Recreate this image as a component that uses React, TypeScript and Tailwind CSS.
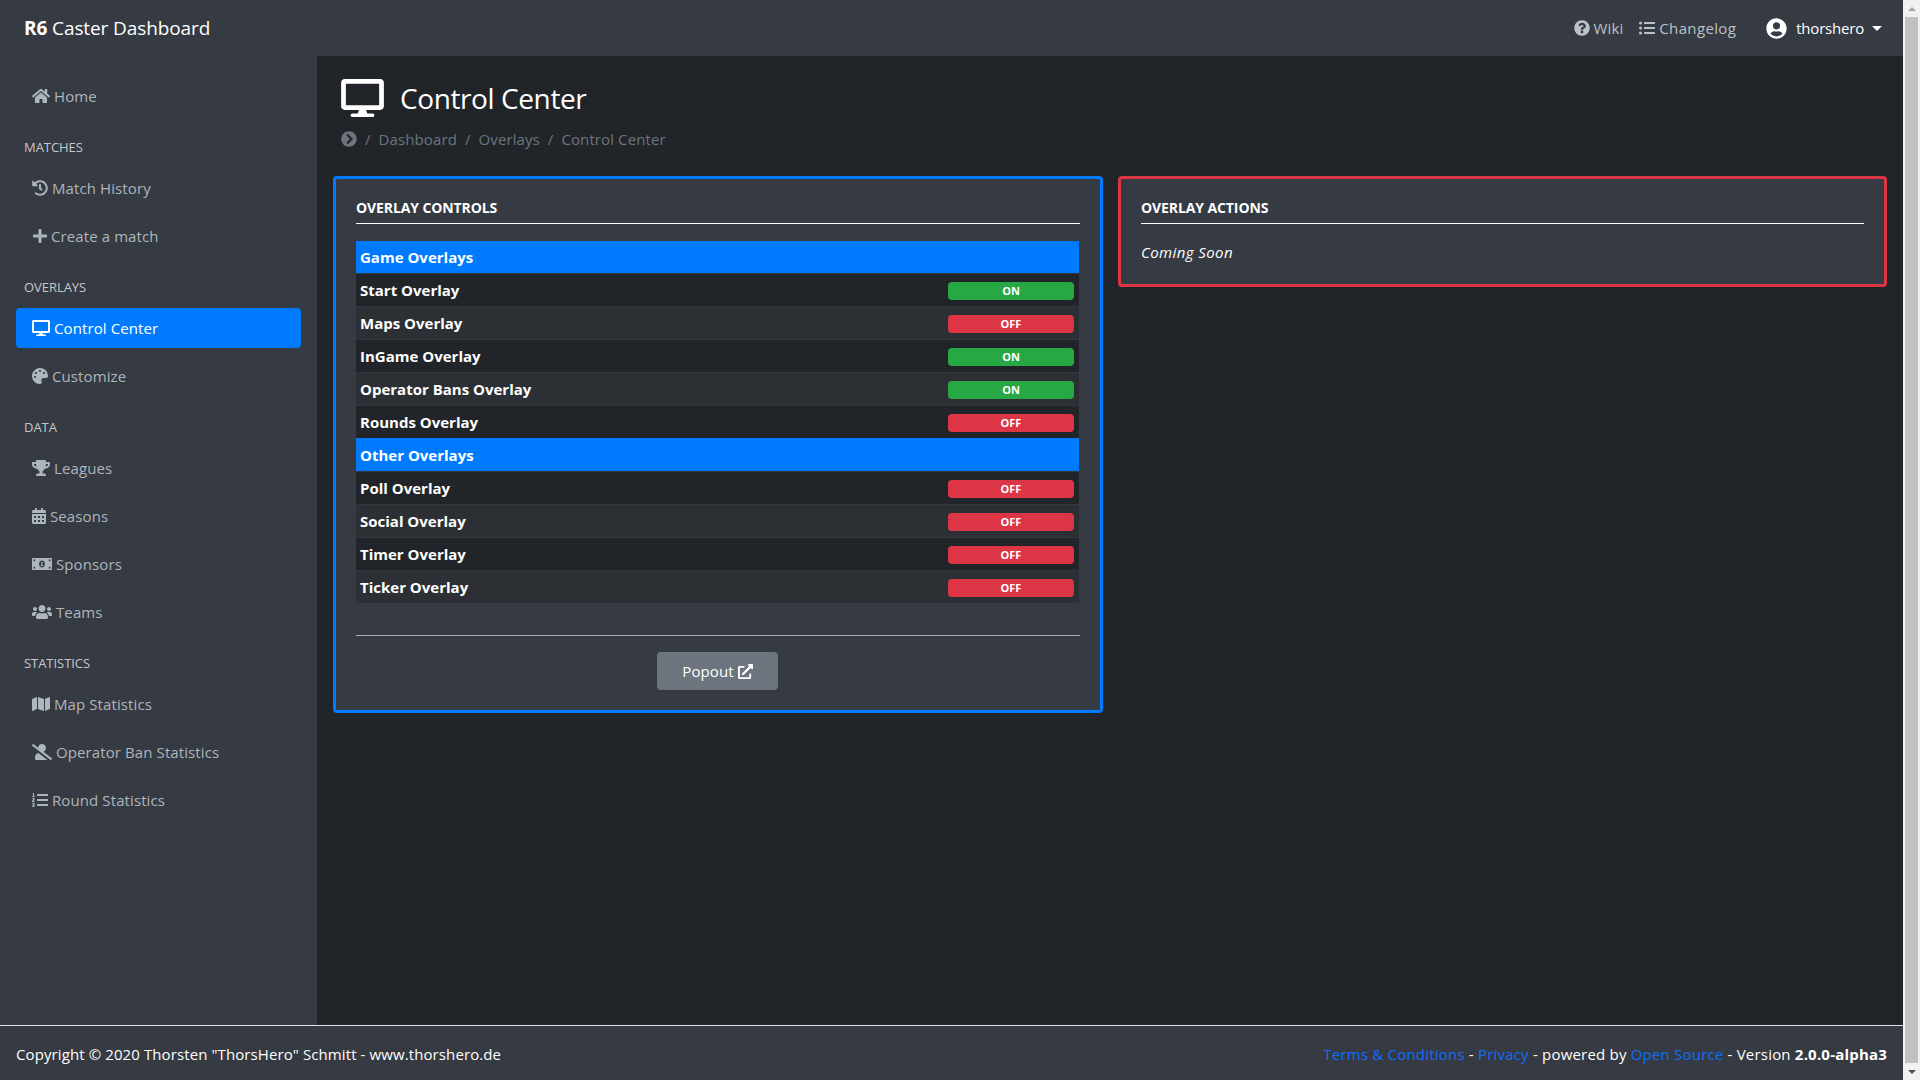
import React from "react";
import {
  FaHome, FaHistory, FaPlus, FaDesktop, FaPalette, FaTrophy, FaCalendarAlt, FaMoneyBillAlt, FaUsers, FaMap, FaUserSlash, FaListOl,
  FaQuestionCircle, FaListUl, FaUserCircle, FaChevronCircleRight, FaExternalLinkAlt,
} from "react-icons/fa";

const font = "font-['Open_Sans','Noto_Sans',sans-serif]";

function NavItem({ icon, label, gap, active }: { icon: React.ReactNode; label: string; gap?: string; active?: boolean }) {
  return (
    <a className={`flex items-center h-10 mb-2 rounded-[4px] pl-4 text-[15px] tracking-[0.1px] ${gap ?? "gap-[4px]"} ${active ? "bg-[#007bff] text-white" : "text-[#adb5bd]"}`}>
      {icon}
      <span>{label}</span>
    </a>
  );
}

function Heading({ children }: { children: React.ReactNode }) {
  return <div className="h-11 pl-2 pt-[13px] text-[13px] leading-5 tracking-[-0.05px] text-[#c4c8cd]">{children}</div>;
}

function Row({ label, on, alt }: { label: string; on: boolean; alt?: boolean }) {
  return (
    <div className={`flex items-center justify-between h-[33px] pl-1 pr-[5px] border-t border-[#32383e] ${alt ? "bg-[#2c3034]" : "bg-[#212529]"}`}>
      <span className="text-[15px] font-bold tracking-[0px] text-white">{label}</span>
      <span className={`flex items-center justify-center w-[126px] h-[18px] mt-[2px] rounded-[4px] text-[11px] font-bold text-white ${on ? "bg-[#28a745]" : "bg-[#dc3545]"}`}>
        {on ? "ON" : "OFF"}
      </span>
    </div>
  );
}

function GroupRow({ label, first }: { label: string; first?: boolean }) {
  return (
    <div className={`flex items-center pt-[1px] px-1 bg-[#007bff] text-[15px] font-bold tracking-[0px] text-white ${first ? "h-8" : "h-[33px]"}`}>{label}</div>
  );
}

export default function App() {
  return (
    <div className={`flex h-screen w-screen overflow-hidden bg-[#212529] ${font}`}>
      <div className="flex flex-col flex-1 min-w-0">
        <header className="flex items-center h-14 shrink-0 bg-[#363a42] pl-6 pr-[21px] text-white">
          <div className="text-[19px] tracking-[-0.1px]"><b>R6</b> Caster Dashboard</div>
          <div className="ml-auto flex items-center text-[15px] tracking-[0.1px] text-[#bcc1c6]">
            <FaQuestionCircle className="w-4 h-4 mr-[4px]" />
            <span>Wiki</span>
            <FaListUl className="w-4 h-4 ml-4 mr-[4px]" />
            <span className="tracking-[0.35px]">Changelog</span>
            <FaUserCircle className="w-[21px] h-[21px] ml-[30px] mr-[9px] text-white" />
            <span className="text-white tracking-[-0.2px]">thorshero</span>
            <span className="ml-2 w-0 h-0 border-x-[5px] border-x-transparent border-t-[5px] border-t-white" />
          </div>
        </header>
        <div className="flex flex-1 min-h-0">
          <aside className="w-[317px] shrink-0 bg-[#363a42] pl-4 pr-4 pt-5">
            <NavItem icon={<FaHome className="w-[18px] h-[16px]" />} label="Home" />
            <Heading>MATCHES</Heading>
            <NavItem icon={<FaHistory className="w-[16px] h-[16px]" />} label="Match History" />
            <NavItem gap="gap-[3px]" icon={<FaPlus className="w-[16px] h-[16px]" />} label="Create a match" />
            <Heading>OVERLAYS</Heading>
            <NavItem active icon={<FaDesktop className="w-[18px] h-[16px]" />} label="Control Center" />
            <NavItem icon={<FaPalette className="w-[16px] h-[16px]" />} label="Customize" />
            <Heading>DATA</Heading>
            <NavItem icon={<FaTrophy className="w-[18px] h-[16px]" />} label="Leagues" />
            <NavItem icon={<FaCalendarAlt className="w-[14px] h-[16px]" />} label="Seasons" />
            <NavItem icon={<FaMoneyBillAlt className="w-[20px] h-[16px]" />} label="Sponsors" />
            <NavItem icon={<FaUsers className="w-[20px] h-[16px]" />} label="Teams" />
            <Heading>STATISTICS</Heading>
            <NavItem icon={<FaMap className="w-[18px] h-[16px]" />} label="Map Statistics" />
            <NavItem icon={<FaUserSlash className="w-[20px] h-[16px]" />} label="Operator Ban Statistics" />
            <NavItem icon={<FaListOl className="w-[16px] h-[16px]" />} label="Round Statistics" />
          </aside>
          <main className="flex-1 min-w-0 px-4 pt-[22px]">
            <div className="pl-2 flex items-center h-10 text-white">
              <FaDesktop className="w-[43px] h-[38px]" />
              <h1 className="ml-4 text-[28px] tracking-[-0.4px] leading-none">Control Center</h1>
            </div>
            <div className="pl-2 mt-2 h-[26px] flex items-center text-[15px] tracking-[0.1px] text-[#6c757d]">
              <FaChevronCircleRight className="w-4 h-4" />
              <span className="mx-2">/</span>
              <span>Dashboard</span>
              <span className="mx-2">/</span>
              <span>Overlays</span>
              <span className="mx-2">/</span>
              <span>Control Center</span>
            </div>
            <div className="mt-6 flex items-start gap-[15px]">
              <section className="w-[770px] h-[537px] shrink-0 border-[3px] border-[#007bff] rounded-[4px] bg-[#363a42] px-5 pt-[19px] text-white">
                <h2 className="h-[26px] border-b border-white text-[14px] font-bold tracking-[-0.1px] leading-[20px]">OVERLAY CONTROLS</h2>
                <div className="mt-[17px] w-[723px]">
                  <GroupRow first label="Game Overlays" />
                  <Row label="Start Overlay" on />
                  <Row label="Maps Overlay" on={false} alt />
                  <Row label="InGame Overlay" on />
                  <Row label="Operator Bans Overlay" on alt />
                  <Row label="Rounds Overlay" on={false} />
                  <GroupRow label="Other Overlays" />
                  <Row label="Poll Overlay" on={false} />
                  <Row label="Social Overlay" on={false} alt />
                  <Row label="Timer Overlay" on={false} />
                  <Row label="Ticker Overlay" on={false} alt />
                </div>
                <div className="mt-8 border-t border-[#a9acb0]" />
                <div className="mt-4 flex justify-center">
                  <button className="flex items-center justify-center gap-[4px] w-[121px] h-[38px] -ml-[1px] rounded-[4px] bg-[#6c757d] text-[15px] tracking-[0.1px] text-white">
                    Popout <FaExternalLinkAlt className="w-[15px] h-[15px]" />
                  </button>
                </div>
              </section>
              <section className="w-[769px] h-[111px] border-[3px] border-[#dc3545] rounded-[4px] bg-[#363a42] px-5 pt-[19px] text-white">
                <h2 className="h-[26px] border-b border-white text-[14px] font-bold tracking-[-0.1px] leading-[20px]">OVERLAY ACTIONS</h2>
                <p className="mt-[18px] text-[15px] italic tracking-[0.4px] leading-[20px]">Coming Soon</p>
              </section>
            </div>
          </main>
        </div>
        <footer className="flex items-center justify-between h-[55px] shrink-0 border-t border-[#dee2e6] bg-[#363a42] pl-4 pr-4 pt-[2px] text-[15px] tracking-[0.1px] text-white">
          <div>Copyright © 2020 Thorsten "ThorsHero" Schmitt - www.thorshero.de</div>
          <div className="tracking-[0.2px]">
            <a className="text-[#0d6efd]">Terms &amp; Conditions</a> - <a className="text-[#0d6efd]">Privacy</a> - powered by <a className="text-[#0d6efd]">Open Source</a> - Version <b>2.0.0-alpha3</b>
          </div>
        </footer>
      </div>
      <div className="flex flex-col w-[17px] shrink-0 bg-[#f1f1f1]">
        <div className="flex items-center justify-center h-[17px]">
          <span className="w-0 h-0 border-x-[4px] border-x-transparent border-b-[4px] border-b-[#a3a3a3]" />
        </div>
        <div className="flex-1 mx-[2px] bg-[#c1c1c1]" />
        <div className="flex items-center justify-center h-[17px]">
          <span className="w-0 h-0 border-x-[4px] border-x-transparent border-t-[4px] border-t-[#505050]" />
        </div>
      </div>
    </div>
  );
}
